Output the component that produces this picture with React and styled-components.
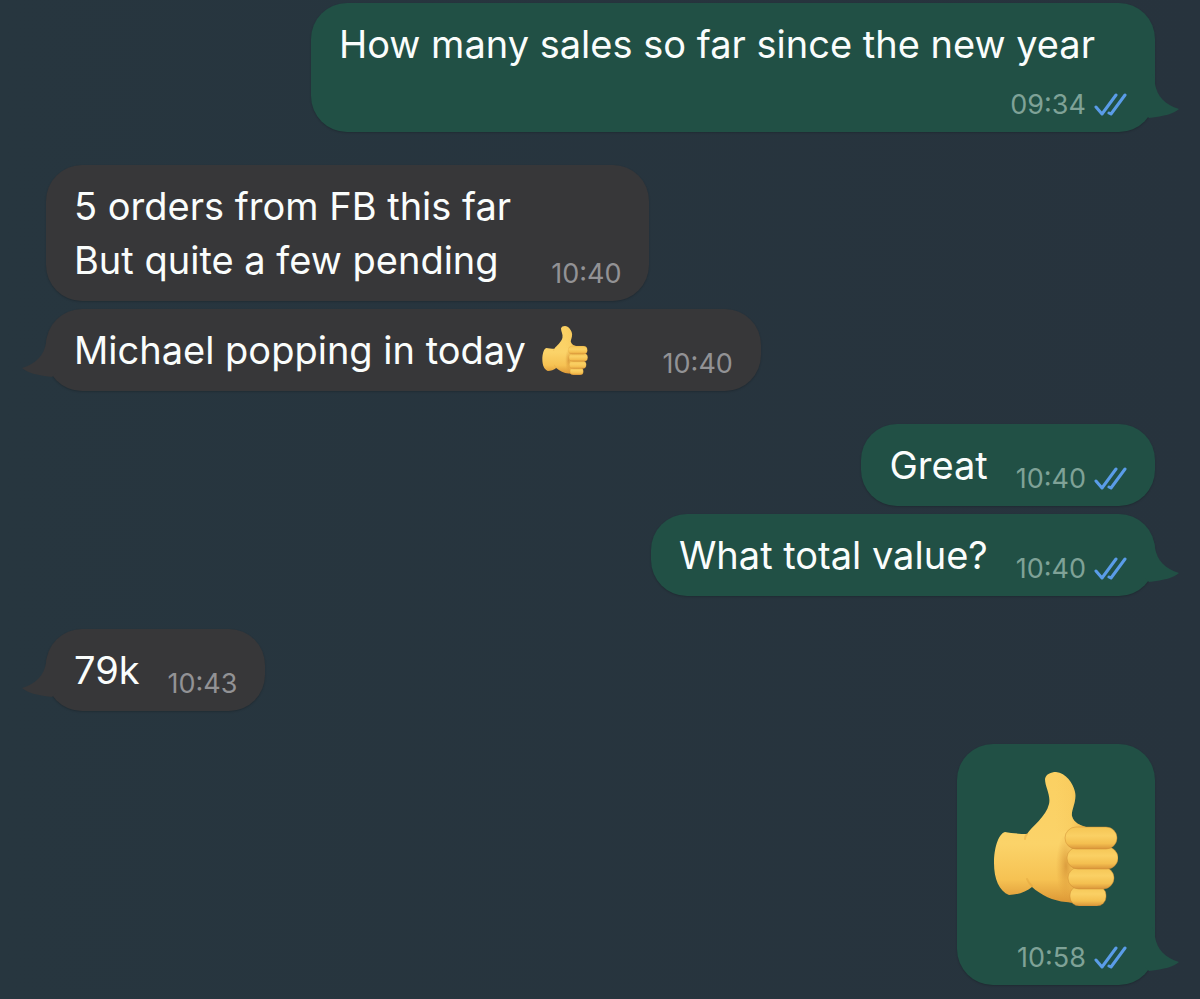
import styled, { createGlobalStyle } from 'styled-components';

const GlobalStyle = createGlobalStyle`
  *, *::before, *::after {
    box-sizing: border-box;
  }

  body {
    margin: 0;
    min-height: 100vh;
    background: linear-gradient(90deg, #27363f, #27333d);
    font-family: Inter, 'Liberation Sans', sans-serif;
  }
`;

const StyledChat = styled.main`
  padding: 3px 45px 14px 46px;
`;

const StyledGroup = styled.section`
  display: flex;
  flex-direction: column;
  align-items: ${({ $sent }) => ($sent ? 'flex-end' : 'flex-start')};
  gap: 8px;

  & + & {
    margin-top: 33px;
  }
`;

const StyledBubble = styled.article`
  position: relative;
  display: flex;
  flex-direction: ${({ $stacked }) => ($stacked ? 'column' : 'row')};
  align-items: flex-end;
  column-gap: ${({ $gap }) => $gap || 28}px;
  max-width: 80%;
  padding: 14px 28px;
  border-radius: 36px;
  background: ${({ $sent }) => ($sent ? '#215045' : '#373739')};
  box-shadow: 0 1px 2px rgba(0, 0, 0, 0.18);
`;

const StyledText = styled.p`
  align-self: flex-start;
  margin: 0;
  color: #fafdfc;
  font-size: 38px;
  line-height: 54px;
  white-space: pre-line;
  padding-right: ${({ $inset }) => ($inset ? 32 : 0)}px;
`;

const StyledMeta = styled.footer`
  display: flex;
  align-items: center;
  gap: 8px;
  margin-top: ${({ $stacked }) => ($stacked ? 21 : 0)}px;
  color: ${({ $sent }) => ($sent ? '#7fa297' : '#929295')};
  font-size: 27px;
  line-height: 26px;
`;

const StyledChecks = styled.svg`
  width: 33px;
  height: 24px;
  fill: none;
  stroke: #5a9ce8;
  stroke-width: 3;
  stroke-linecap: round;
  stroke-linejoin: round;
`;

const StyledTail = styled.svg`
  position: absolute;
  bottom: 12px;
  ${({ $sent }) => ($sent ? 'right: -24px;' : 'left: -24px; transform: scaleX(-1);')}
  width: 34px;
  height: 46px;
  fill: ${({ $sent }) => ($sent ? '#215045' : '#373739')};
`;

const StyledSmallThumb = styled.svg`
  width: 46px;
  height: 49px;
  margin-left: 5px;
  vertical-align: -11px;
`;

const StyledLargeThumb = styled.svg`
  width: 124px;
  height: 134px;
  margin: 14px 9px 18px;
`;

const groups = [
  {
    sent: true,
    messages: [
      {
        text: 'How many sales so far since the new year',
        time: '09:34',
        stacked: true,
      },
    ],
  },
  {
    sent: false,
    messages: [
      {
        text: '5 orders from FB this far\nBut quite a few pending',
        time: '10:40',
        gap: 40,
      },
      { text: 'Michael popping in today', thumb: true, time: '10:40', gap: 75 },
    ],
  },
  {
    sent: true,
    messages: [
      { text: 'Great', time: '10:40' },
      { text: 'What total value?', time: '10:40' },
    ],
  },
  { sent: false, messages: [{ text: '79k', time: '10:43' }] },
  { sent: true, messages: [{ sticker: true, time: '10:58', stacked: true }] },
];

const Thumb = ({ as: Svg, id }) => (
  <Svg viewBox="0 0 124 134" role="img" aria-label="Thumbs up">
    <defs>
      <linearGradient id={`${id}-hand`} x1="0" y1="0" x2="0" y2="1">
        <stop offset="0" stopColor="#fbd062" />
        <stop offset="0.55" stopColor="#fbd369" />
        <stop offset="0.82" stopColor="#f6c253" />
        <stop offset="1" stopColor="#dc9634" />
      </linearGradient>
      <linearGradient id={`${id}-finger`} x1="0" y1="0" x2="0" y2="1">
        <stop offset="0" stopColor="#f5c554" />
        <stop offset="0.4" stopColor="#fad064" />
        <stop offset="0.75" stopColor="#f4bf50" />
        <stop offset="1" stopColor="#d9953a" />
      </linearGradient>
      <linearGradient id={`${id}-thumb`} x1="0" y1="0" x2="1" y2="0">
        <stop offset="0" stopColor="#e9a93a" stopOpacity="0" />
        <stop offset="0.5" stopColor="#e9a93a" stopOpacity="0.1" />
        <stop offset="1" stopColor="#df9a32" stopOpacity="0.6" />
      </linearGradient>
      <radialGradient id={`${id}-palm`}>
        <stop offset="0" stopColor="#c9812a" stopOpacity="0.6" />
        <stop offset="1" stopColor="#d99535" stopOpacity="0" />
      </radialGradient>
    </defs>
    <path
      fill={`url(#${id}-hand)`}
      d="M11 60C17 61 25 62 33 62C38 54 52 45 55 32C57 23 51 15 51 7C52 2 57 0 62 0C72 1 79 11 81 20C83 29 77 38 78 44C80 51 86 53 92 55L96 127C91 133 78 131 72 130C59 129 47 123 38 115C32 120 23 123 15 123C5 119 0 107 0 91C0 77 4 62 11 60Z"
    />
    <path
      fill={`url(#${id}-thumb)`}
      d="M62 0C72 1 79 11 81 20C83 29 77 38 78 44C80 51 86 53 92 55L62 61Z"
    />
    <ellipse cx="72" cy="94" rx="10" ry="32" fill={`url(#${id}-palm)`} />
    <path
      fill="none"
      stroke="#d99a37"
      strokeOpacity="0.35"
      strokeWidth="2"
      strokeLinecap="round"
      d="M33 62C31 64 31 65 31 67M38 114C36 112 34 110 33 107"
    />
    <g fill={`url(#${id}-finger)`} stroke="#cc8930" strokeOpacity="0.45">
      <rect x="76" y="114" width="36" height="20" rx="9" />
      <rect x="74" y="95" width="46" height="22" rx="11" />
      <rect x="73" y="75" width="51" height="22" rx="11" />
      <rect x="71" y="55" width="52" height="22" rx="11" />
    </g>
  </Svg>
);

const Checks = () => (
  <StyledChecks viewBox="0 0 33 24" role="img" aria-label="Read">
    <path d="M2 14L8 21L22 2" />
    <path d="M15 20L17 21L31 2" />
  </StyledChecks>
);

const Message = ({ message, sent, last, id }) => (
  <StyledBubble $sent={sent} $stacked={message.stacked} $gap={message.gap}>
    {last && (
      <StyledTail $sent={sent} viewBox="0 0 34 46" aria-hidden="true">
        <path d="M0 0H7C9 4 10 7 10 10C12 22 20 31 34 35C28 40 20 42 4 44L0 40Z" />
      </StyledTail>
    )}
    {message.sticker ? (
      <Thumb as={StyledLargeThumb} id={id} />
    ) : (
      <StyledText $inset={message.stacked}>
        {message.text}
        {message.thumb && (
          <>
            {' '}
            <Thumb as={StyledSmallThumb} id={id} />
          </>
        )}
      </StyledText>
    )}
    <StyledMeta $sent={sent} $stacked={message.stacked}>
      <time>{message.time}</time>
      {sent && <Checks />}
    </StyledMeta>
  </StyledBubble>
);

const App = () => (
  <>
    <GlobalStyle />
    <StyledChat>
      {groups.map((group, groupIndex) => (
        <StyledGroup key={groupIndex} $sent={group.sent}>
          {group.messages.map((message, index) => (
            <Message
              key={index}
              id={`message-${groupIndex}-${index}`}
              message={message}
              sent={group.sent}
              last={index === group.messages.length - 1}
            />
          ))}
        </StyledGroup>
      ))}
    </StyledChat>
  </>
);

export default App;
